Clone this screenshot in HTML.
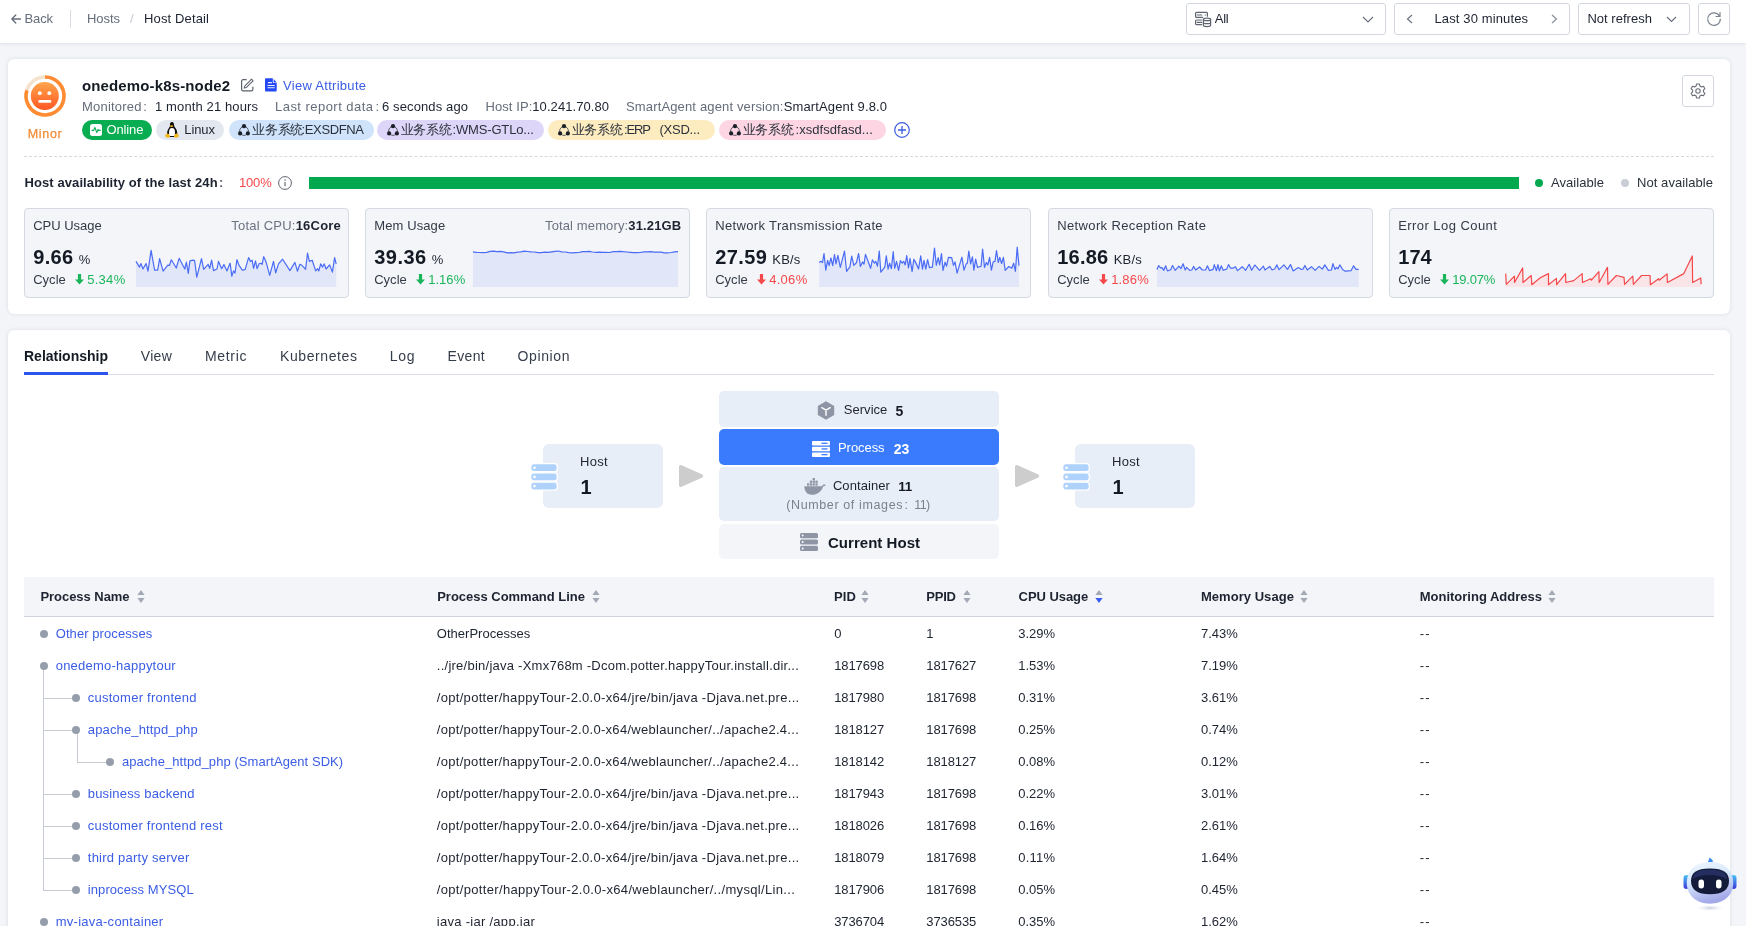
<!DOCTYPE html>
<html><head><meta charset="utf-8"><style>
*{box-sizing:border-box;margin:0;padding:0}
html,body{width:1746px;height:926px;overflow:hidden}
body{background:#f3f5f9;font-family:"Liberation Sans",sans-serif;color:#1d2330;font-size:13px;position:relative}
.a{position:absolute;white-space:nowrap;line-height:1}
svg{position:absolute;overflow:visible}
.g{color:#656d7a}
.card{position:absolute;background:#fff;border-radius:6px;box-shadow:0 0 4px rgba(30,40,60,0.12)}
.btn{position:absolute;border:1px solid #d3d8e0;border-radius:3px;background:#fff}
.pill{position:absolute;top:120px;height:20px;border-radius:10px}
.mc{position:absolute;top:208px;height:90px;border:1px solid #d5d9e1;border-radius:4px;background:#f4f5f9}
.lk{color:#3b5ce4}
</style></head><body><div id="w" style="position:absolute;left:0;top:0;width:1746px;height:926px;will-change:transform">
<div style="position:absolute;left:0;top:0;width:1746px;height:43px;background:#fff;box-shadow:0 1px 3px rgba(30,40,60,0.10)"></div>
<svg style="left:10px;top:13px" width="12" height="12" viewBox="0 0 12 12"><path d="M10.5 6H1.8M5.8 2L1.8 6l4 4" fill="none" stroke="#656d7a" stroke-width="1.3" stroke-linecap="round" stroke-linejoin="round"/></svg>
<div class="a g" style="left:24.5px;top:12.00px;font-size:13px;;letter-spacing:-0.134px">Back</div>
<div class="a" style="left:70px;top:10px;width:1px;height:18px;background:#d8dce3"></div>
<div class="a g" style="left:87px;top:12.00px;font-size:13px;;letter-spacing:-0.057px">Hosts</div>
<div class="a " style="left:130px;top:12.00px;font-size:13px;color:#c3c8d0">/</div>
<div class="a " style="left:144px;top:12.00px;font-size:13px;color:#1d2330;letter-spacing:0.142px">Host Detail</div>
<div class="btn" style="left:1186px;top:3px;width:200px;height:32px"></div>
<svg style="left:1195px;top:12px" width="16" height="15" viewBox="0 0 16 15"><g fill="none" stroke="#5f6570" stroke-width="1.2" stroke-linecap="round"><path d="M7.6 5.4H1.4A0.9 0.9 0 0 1 0.6 4.5V1.2A0.9 0.9 0 0 1 1.4 0.4H11.6A0.9 0.9 0 0 1 12.4 1.2V4.2"/><path d="M2.3 3H6.8M10.2 3h.2"/><path d="M6.6 12.6H1.4A0.9 0.9 0 0 1 0.6 11.8V8.8A0.9 0.9 0 0 1 1.4 8H6.6M2.3 10.4H6.6"/><path d="M8.4 7.4C8.4 6.6 10 6.1 12 6.1S15.6 6.6 15.6 7.4V13.3C15.6 14.1 14 14.6 12 14.6S8.4 14.1 8.4 13.3z"/><path d="M8.4 7.4C8.4 8.2 10 8.7 12 8.7S15.6 8.2 15.6 7.4M8.4 10.4C8.4 11.2 10 11.7 12 11.7S15.6 11.2 15.6 10.4"/></g></svg>
<div class="a " style="left:1214.7px;top:12.00px;font-size:13px;color:#1d2330;letter-spacing:-0.224px">All</div>
<svg style="left:1362px;top:16px" width="12" height="7" viewBox="0 0 12 7"><path d="M1 1l5 5 5-5" fill="none" stroke="#6b7280" stroke-width="1.2"/></svg>
<div class="btn" style="left:1394px;top:3px;width:176px;height:32px"></div>
<svg style="left:1406px;top:14px" width="7" height="10" viewBox="0 0 7 10"><path d="M6 1L1.5 5 6 9" fill="none" stroke="#6b7280" stroke-width="1.2"/></svg>
<div class="a " style="left:1434.5px;top:12.00px;font-size:13px;color:#1d2330;letter-spacing:0.123px">Last 30 minutes</div>
<svg style="left:1551px;top:14px" width="7" height="10" viewBox="0 0 7 10"><path d="M1 1l4.5 4L1 9" fill="none" stroke="#8a919d" stroke-width="1.2"/></svg>
<div class="btn" style="left:1578px;top:3px;width:112px;height:32px"></div>
<div class="a " style="left:1587.4px;top:12.00px;font-size:13px;color:#1d2330;letter-spacing:0.030px">Not refresh</div>
<svg style="left:1666px;top:16px" width="11" height="7" viewBox="0 0 11 7"><path d="M1 1l4.5 4.5L10 1" fill="none" stroke="#6b7280" stroke-width="1.2"/></svg>
<div class="btn" style="left:1698px;top:3px;width:32px;height:32px"></div>
<svg style="left:1706px;top:11px" width="16" height="16" viewBox="0 0 16 16"><path d="M13.6 5.2A6.3 6.3 0 1 0 14.3 8" fill="none" stroke="#7b828e" stroke-width="1.2" stroke-linecap="round"/><path d="M14 1.5v4h-4" fill="none" stroke="#7b828e" stroke-width="1.2" stroke-linecap="round" stroke-linejoin="round"/></svg>
<div class="card" style="left:8px;top:59px;width:1722px;height:255px"></div>
<svg style="left:24px;top:75px" width="42" height="42" viewBox="0 0 42 42"><defs><linearGradient id="fg" x1="0" y1="0" x2="0" y2="1"><stop offset="0" stop-color="#ffa54c"/><stop offset="1" stop-color="#ff5722"/></linearGradient></defs><path d="M21.00 2.00A19 19 0 1 1 2.93 15.13" fill="none" stroke="#ff8c33" stroke-width="3.6"/><path d="M2.93 15.13A19 19 0 0 1 21.00 2.00" fill="none" stroke="#f4e2cc" stroke-width="3.6"/><circle cx="20.8" cy="21" r="14" fill="url(#fg)"/><circle cx="15.8" cy="18.2" r="1.9" fill="#fff"/><circle cx="25.3" cy="18.2" r="1.9" fill="#fff"/><rect x="14.3" y="25" width="13" height="2.8" rx="1.2" fill="#fff"/></svg>
<div class="a " style="left:27.7px;top:127.62px;font-size:12.5px;color:#f38b36;-webkit-text-stroke:0.25px #f38b36;letter-spacing:0.686px">Minor</div>
<div class="a " style="left:82px;top:78.30px;font-size:15px;font-weight:bold;color:#141a24;letter-spacing:0.134px">onedemo-k8s-node2</div>
<svg style="left:241px;top:79px" width="13" height="13" viewBox="0 0 13 13"><path d="M5.6 0.6H2.2A1.6 1.6 0 0 0 0.6 2.2v8.1a1.6 1.6 0 0 0 1.6 1.6h8.1a1.6 1.6 0 0 0 1.6-1.6V7.7" fill="none" stroke="#5b616c" stroke-width="1.2"/><path d="M10.52 0.2L12.08 1.76 5.49 8.39 3.1 9.1 3.93 6.83z" fill="none" stroke="#5b616c" stroke-width="1.05" stroke-linejoin="round"/></svg>
<svg style="left:265px;top:78px" width="12" height="14" viewBox="0 0 12 14"><path d="M1 0.2H7.8V4.2A0.8 0.8 0 0 0 8.6 5H11.7V12.6A1 1 0 0 1 10.7 13.6H1A1 1 0 0 1 0 12.6V1.2A1 1 0 0 1 1 0.2z" fill="#2449f4"/><path d="M8.6 0.9L11.7 4.6H9.1A0.5 0.5 0 0 1 8.6 4.1z" fill="#2449f4"/><path d="M3 4.6H6.9M2.5 7.45H9.7M2.5 9.75H9.7" stroke="#fff" stroke-width="1.05" opacity="0.9"/></svg>
<div class="a lk" style="left:283px;top:79.00px;font-size:13px;;letter-spacing:0.289px">View Attribute</div>
<div class="a g" style="left:82px;top:100.00px;font-size:13px;;letter-spacing:0.212px">Monitored</div>
<div class="a g" style="left:143.3px;top:100.00px;font-size:13px;">:</div>
<div class="a " style="left:155px;top:100.00px;font-size:13px;color:#1d2330;letter-spacing:0.122px">1 month 21 hours</div>
<div class="a g" style="left:275px;top:100.00px;font-size:13px;;letter-spacing:0.463px">Last report data</div>
<div class="a g" style="left:375.5px;top:100.00px;font-size:13px;">:</div>
<div class="a " style="left:382px;top:100.00px;font-size:13px;color:#1d2330;letter-spacing:0.120px">6 seconds ago</div>
<div class="a g" style="left:485.5px;top:100.00px;font-size:13px;;letter-spacing:0.072px">Host IP:<span style="color:#1d2330">10.241.70.80</span></div>
<div class="a g" style="left:626px;top:100.00px;font-size:13px;;letter-spacing:0.148px">SmartAgent agent version:<span style="color:#1d2330">SmartAgent 9.8.0</span></div>
<div class="pill" style="left:82px;width:70px;background:#08ad52"></div>
<svg style="left:90px;top:124px" width="12" height="12" viewBox="0 0 12 12"><rect width="12" height="12" rx="2.5" fill="#fff"/><path d="M1.6 6.4h2.1l1.2-3 1.9 5.2 1.2-3.2.7 1h2" fill="none" stroke="#08ad52" stroke-width="1.1" stroke-linejoin="round"/></svg>
<div class="a " style="left:106.4px;top:123.00px;font-size:13px;color:#fff;letter-spacing:-0.115px">Online</div>
<div class="pill" style="left:156px;width:68px;background:#e3e8f0"></div>
<svg style="left:165px;top:122px" width="14" height="16" viewBox="0 0 14 16"><path d="M6.9 0C5.3 0 4.9 1.6 5 3.4 4.9 4.6 4.4 5.3 3.6 6.6 2.8 7.9 2 9.5 2.1 12.2L12.3 12.2C12.4 9.3 11.6 7.6 10.6 6.2 9.8 5.1 9.2 4.3 9.1 3.2 9 1.4 8.5 0 6.9 0z" fill="#0d0d0d"/><ellipse cx="7" cy="10.2" rx="3" ry="4.3" fill="#fff"/><ellipse cx="6.6" cy="4.1" rx="1.6" ry="0.9" fill="#f2b51a"/><rect x="4.5" y="14" width="5" height="1" fill="#111"/><path d="M0.2 13.6C0.6 12 1.6 11.3 2.6 11.4 3.6 11.5 4.9 12.8 5 14.3 5.1 15.5 4 15.9 2.8 15.7 1.2 15.4-.1 14.8.2 13.6z" fill="#f2b51a"/><path d="M13.8 13.6C13.4 12 12.4 11.3 11.4 11.4 10.4 11.5 9.1 12.8 9 14.3 8.9 15.5 10 15.9 11.2 15.7 12.8 15.4 14.1 14.8 13.8 13.6z" fill="#f2b51a"/></svg>
<div class="a " style="left:184.3px;top:123.00px;font-size:13px;color:#1d2330;letter-spacing:-0.094px">Linux</div>
<div class="pill" style="left:228.5px;width:145px;background:#cfe3fb"></div>
<svg style="left:238.1px;top:124px" width="12" height="12" viewBox="0 0 12 12"><circle cx="6" cy="7" r="4.4" fill="none" stroke="#3a3f48" stroke-width="0.8"/><circle cx="6" cy="2.2" r="2.1" fill="#1b1f27"/><circle cx="2.1" cy="9.4" r="2.1" fill="#1b1f27"/><circle cx="9.9" cy="9.4" r="2.1" fill="#1b1f27"/></svg>
<div class="a " style="left:252.3px;top:123.30px;font-size:13px;color:#2b313b;letter-spacing:-0.35px">业务系统</div>
<div class="a " style="left:301.5px;top:123.00px;font-size:13px;color:#2b313b;letter-spacing:-0.359px">:EXSDFNA</div>
<div class="pill" style="left:377px;width:167px;background:#ded6f9"></div>
<svg style="left:386.6px;top:124px" width="12" height="12" viewBox="0 0 12 12"><circle cx="6" cy="7" r="4.4" fill="none" stroke="#3a3f48" stroke-width="0.8"/><circle cx="6" cy="2.2" r="2.1" fill="#1b1f27"/><circle cx="2.1" cy="9.4" r="2.1" fill="#1b1f27"/><circle cx="9.9" cy="9.4" r="2.1" fill="#1b1f27"/></svg>
<div class="a " style="left:400.8px;top:123.30px;font-size:13px;color:#2b313b;letter-spacing:-0.35px">业务系统</div>
<div class="a " style="left:452.5px;top:123.00px;font-size:13px;color:#2b313b;letter-spacing:-0.160px">:WMS-GTLo...</div>
<div class="pill" style="left:548px;width:167px;background:#fcecc0"></div>
<svg style="left:557.6px;top:124px" width="12" height="12" viewBox="0 0 12 12"><circle cx="6" cy="7" r="4.4" fill="none" stroke="#3a3f48" stroke-width="0.8"/><circle cx="6" cy="2.2" r="2.1" fill="#1b1f27"/><circle cx="2.1" cy="9.4" r="2.1" fill="#1b1f27"/><circle cx="9.9" cy="9.4" r="2.1" fill="#1b1f27"/></svg>
<div class="a " style="left:571.8px;top:123.30px;font-size:13px;color:#2b313b;letter-spacing:-0.35px">业务系统</div>
<div class="a " style="left:624px;top:123.00px;font-size:13px;color:#2b313b;letter-spacing:-1.181px">:ERP</div>
<div class="a " style="left:659.5px;top:123.00px;font-size:13px;color:#2b313b">(</div>
<div class="a " style="left:663.6px;top:123.00px;font-size:13px;color:#2b313b;letter-spacing:-0.233px">XSD...</div>
<div class="pill" style="left:719px;width:167px;background:#fdd5e3"></div>
<svg style="left:728.6px;top:124px" width="12" height="12" viewBox="0 0 12 12"><circle cx="6" cy="7" r="4.4" fill="none" stroke="#3a3f48" stroke-width="0.8"/><circle cx="6" cy="2.2" r="2.1" fill="#1b1f27"/><circle cx="2.1" cy="9.4" r="2.1" fill="#1b1f27"/><circle cx="9.9" cy="9.4" r="2.1" fill="#1b1f27"/></svg>
<div class="a " style="left:742.8px;top:123.30px;font-size:13px;color:#2b313b;letter-spacing:-0.35px">业务系统</div>
<div class="a " style="left:795.5px;top:123.00px;font-size:13px;color:#2b313b;letter-spacing:0.055px">:xsdfsdfasd...</div>
<svg style="left:894px;top:122px" width="16" height="16" viewBox="0 0 16 16"><circle cx="8" cy="8" r="7.3" fill="none" stroke="#3b5ce4" stroke-width="1.2"/><path d="M8 4v8M4 8h8" stroke="#3b5ce4" stroke-width="1.3"/></svg>
<div class="btn" style="left:1682px;top:75px;width:32px;height:32px;border-color:#d3d8e0"></div>
<svg style="left:1690px;top:83px" width="16" height="16" viewBox="0 0 16 16"><path d="M6.6 1h2.8l.5 2 1.6.9 2-.6 1.4 2.4-1.5 1.5v1.6l1.5 1.5-1.4 2.4-2-.6-1.6.9-.5 2H6.6l-.5-2-1.6-.9-2 .6L1.1 10.3l1.5-1.5V7.2L1.1 5.7l1.4-2.4 2 .6L6.1 3z" fill="none" stroke="#6b6f78" stroke-width="1.1" stroke-linejoin="round"/><circle cx="8" cy="8" r="2.2" fill="none" stroke="#6b6f78" stroke-width="1.1"/></svg>
<div class="a" style="left:24px;top:156px;width:1690px;height:0;border-top:1px dashed #d5d9e0"></div>
<div class="a " style="left:24.4px;top:176.00px;font-size:13px;font-weight:bold;color:#1d2330;letter-spacing:0.100px">Host availability of the last 24h</div>
<div class="a " style="left:219px;top:176.00px;font-size:13px;font-weight:bold;color:#5d636e">:</div>
<div class="a " style="left:239px;top:176.00px;font-size:13px;color:#f5484a;letter-spacing:-0.183px">100%</div>
<svg style="left:278px;top:176px" width="14" height="14" viewBox="0 0 14 14"><circle cx="7" cy="7" r="6.4" fill="none" stroke="#5d636e" stroke-width="1"/><path d="M7 6v4.3" stroke="#5d636e" stroke-width="1.1"/><circle cx="7" cy="4" r="0.75" fill="#5d636e"/></svg>
<div class="a" style="left:309px;top:177px;width:1210px;height:12px;background:#02a84e"></div>
<div class="a" style="left:1535px;top:179px;width:8px;height:8px;border-radius:4px;background:#02a84e"></div>
<div class="a " style="left:1551px;top:176.00px;font-size:13px;color:#2b313b;letter-spacing:0.060px">Available</div>
<div class="a" style="left:1621px;top:179px;width:8px;height:8px;border-radius:4px;background:#c9ced6"></div>
<div class="a " style="left:1637px;top:176.00px;font-size:13px;color:#2b313b;letter-spacing:0.070px">Not available</div>
<div class="mc" style="left:24px;width:325px"></div>
<div class="a " style="left:33.2px;top:219.20px;font-size:13px;color:#333a46;letter-spacing:-0.005px">CPU Usage</div>
<div class="a " style="left:231.29999999999998px;top:219.20px;font-size:13px;color:#6b7280;letter-spacing:0.222px">Total CPU:<b style="color:#1d2330">16Core</b></div>
<div class="a " style="left:33.2px;top:247.07px;font-size:20px;font-weight:bold;color:#141a24;letter-spacing:0.358px">9.66</div>
<div class="a " style="left:78.7px;top:253.00px;font-size:13px;color:#1d2330;letter-spacing:-0.559px">%</div>
<div class="a " style="left:33.2px;top:273.00px;font-size:13px;color:#333a46;letter-spacing:0.023px">Cycle</div>
<svg style="left:75px;top:274px" width="9" height="11" viewBox="0 0 9 11"><path d="M2.9 0h3.2v5.6H9L4.5 10.5 0 5.6h2.9z" fill="#1ab55b"/></svg>
<div class="a " style="left:87.2px;top:273.00px;font-size:13px;color:#1ab55b;letter-spacing:0.285px">5.34%</div>
<svg style="left:0;top:0" width="1746" height="926"><path d="M136.0,287 L136.0,261.4 L139.5,267.1 L141.0,263.6 L142.9,269.0 L146.1,263.6 L148.0,271.2 L151.1,250.4 L154.6,270.2 L157.7,270.2 L159.6,258.6 L163.1,271.2 L167.8,265.2 L169.4,265.5 L171.3,259.8 L176.3,268.0 L179.1,258.3 L184.8,269.0 L186.4,262.1 L188.3,273.4 L189.9,260.8 L193.0,260.2 L194.6,260.5 L196.8,277.2 L201.5,258.6 L203.7,269.3 L208.1,264.3 L209.7,268.4 L211.6,260.2 L213.5,270.6 L217.0,269.0 L218.5,261.4 L221.7,268.7 L223.9,264.6 L227.0,270.9 L230.0,263.3 L230.2,263.6 L231.8,276.2 L231.9,275.9 L233.5,270.9 L234.9,272.8 L235.0,273.1 L236.9,259.8 L237.1,259.8 L238.8,264.9 L242.3,270.2 L245.1,269.6 L248.6,257.6 L250.5,261.4 L252.1,260.2 L253.6,268.4 L255.5,260.8 L257.1,268.7 L259.0,263.9 L260.9,263.3 L262.1,264.3 L263.7,256.7 L265.9,261.4 L269.7,275.3 L273.5,261.4 L275.7,272.8 L278.5,263.9 L282.6,259.2 L289.9,270.6 L294.9,262.4 L297.4,271.2 L299.9,264.3 L301.8,265.2 L305.6,269.3 L307.5,253.2 L309.4,261.4 L312.2,260.2 L315.7,270.9 L317.6,268.7 L318.8,270.9 L320.7,263.9 L322.6,267.1 L324.2,263.9 L326.1,269.0 L329.6,264.9 L332.4,272.1 L334.6,257.6 L336.2,263.9 L336.2,287 Z" fill="#e1e6f8"/><path d="M136.0,261.4 L139.5,267.1 L141.0,263.6 L142.9,269.0 L146.1,263.6 L148.0,271.2 L151.1,250.4 L154.6,270.2 L157.7,270.2 L159.6,258.6 L163.1,271.2 L167.8,265.2 L169.4,265.5 L171.3,259.8 L176.3,268.0 L179.1,258.3 L184.8,269.0 L186.4,262.1 L188.3,273.4 L189.9,260.8 L193.0,260.2 L194.6,260.5 L196.8,277.2 L201.5,258.6 L203.7,269.3 L208.1,264.3 L209.7,268.4 L211.6,260.2 L213.5,270.6 L217.0,269.0 L218.5,261.4 L221.7,268.7 L223.9,264.6 L227.0,270.9 L230.0,263.3 L230.2,263.6 L231.8,276.2 L231.9,275.9 L233.5,270.9 L234.9,272.8 L235.0,273.1 L236.9,259.8 L237.1,259.8 L238.8,264.9 L242.3,270.2 L245.1,269.6 L248.6,257.6 L250.5,261.4 L252.1,260.2 L253.6,268.4 L255.5,260.8 L257.1,268.7 L259.0,263.9 L260.9,263.3 L262.1,264.3 L263.7,256.7 L265.9,261.4 L269.7,275.3 L273.5,261.4 L275.7,272.8 L278.5,263.9 L282.6,259.2 L289.9,270.6 L294.9,262.4 L297.4,271.2 L299.9,264.3 L301.8,265.2 L305.6,269.3 L307.5,253.2 L309.4,261.4 L312.2,260.2 L315.7,270.9 L317.6,268.7 L318.8,270.9 L320.7,263.9 L322.6,267.1 L324.2,263.9 L326.1,269.0 L329.6,264.9 L332.4,272.1 L334.6,257.6 L336.2,263.9" fill="none" stroke="#4a6cf5" stroke-width="1.2" stroke-linejoin="round"/></svg>
<div class="mc" style="left:365px;width:325px"></div>
<div class="a " style="left:374.2px;top:219.20px;font-size:13px;color:#333a46;letter-spacing:0.115px">Mem Usage</div>
<div class="a " style="left:545.0px;top:219.20px;font-size:13px;color:#6b7280;letter-spacing:0.129px">Total memory:<b style="color:#1d2330">31.21GB</b></div>
<div class="a " style="left:374.2px;top:247.07px;font-size:20px;font-weight:bold;color:#141a24;letter-spacing:0.487px">39.36</div>
<div class="a " style="left:431.7px;top:253.00px;font-size:13px;color:#1d2330;letter-spacing:-0.559px">%</div>
<div class="a " style="left:374.2px;top:273.00px;font-size:13px;color:#333a46;letter-spacing:0.023px">Cycle</div>
<svg style="left:416px;top:274px" width="9" height="11" viewBox="0 0 9 11"><path d="M2.9 0h3.2v5.6H9L4.5 10.5 0 5.6h2.9z" fill="#1ab55b"/></svg>
<div class="a " style="left:428.2px;top:273.00px;font-size:13px;color:#1ab55b;letter-spacing:0.035px">1.16%</div>
<svg style="left:0;top:0" width="1746" height="926"><path d="M473.0,287 L473.0,251.8 L476.4,252.4 L479.8,252.5 L483.2,252.6 L486.7,252.3 L490.1,251.4 L493.5,251.1 L496.9,251.7 L500.3,251.4 L503.8,251.8 L507.2,252.8 L510.6,252.6 L514.0,252.8 L517.4,252.2 L520.8,251.9 L524.2,251.2 L527.7,251.5 L531.1,251.9 L534.5,252.0 L537.9,252.6 L541.3,252.7 L544.8,252.2 L548.2,252.4 L551.6,251.8 L555.0,251.3 L558.4,251.0 L561.8,251.9 L565.2,252.0 L568.7,252.6 L572.1,252.9 L575.5,252.7 L578.9,252.5 L582.3,251.7 L585.8,251.7 L589.2,251.4 L592.6,252.0 L596.0,252.3 L599.4,252.1 L602.8,252.3 L606.2,252.3 L609.7,252.5 L613.1,251.7 L616.5,251.6 L619.9,251.3 L623.3,251.7 L626.8,252.0 L630.2,252.3 L633.6,252.7 L637.0,252.6 L640.4,252.5 L643.8,251.9 L647.2,251.8 L650.7,251.7 L654.1,252.1 L657.5,252.2 L660.9,252.2 L664.3,252.9 L667.8,252.9 L671.2,252.5 L674.6,251.8 L678.0,251.6 L678.0,287 Z" fill="#e1e6f8"/><path d="M473.0,251.8 L476.4,252.4 L479.8,252.5 L483.2,252.6 L486.7,252.3 L490.1,251.4 L493.5,251.1 L496.9,251.7 L500.3,251.4 L503.8,251.8 L507.2,252.8 L510.6,252.6 L514.0,252.8 L517.4,252.2 L520.8,251.9 L524.2,251.2 L527.7,251.5 L531.1,251.9 L534.5,252.0 L537.9,252.6 L541.3,252.7 L544.8,252.2 L548.2,252.4 L551.6,251.8 L555.0,251.3 L558.4,251.0 L561.8,251.9 L565.2,252.0 L568.7,252.6 L572.1,252.9 L575.5,252.7 L578.9,252.5 L582.3,251.7 L585.8,251.7 L589.2,251.4 L592.6,252.0 L596.0,252.3 L599.4,252.1 L602.8,252.3 L606.2,252.3 L609.7,252.5 L613.1,251.7 L616.5,251.6 L619.9,251.3 L623.3,251.7 L626.8,252.0 L630.2,252.3 L633.6,252.7 L637.0,252.6 L640.4,252.5 L643.8,251.9 L647.2,251.8 L650.7,251.7 L654.1,252.1 L657.5,252.2 L660.9,252.2 L664.3,252.9 L667.8,252.9 L671.2,252.5 L674.6,251.8 L678.0,251.6" fill="none" stroke="#4a6cf5" stroke-width="1.2" stroke-linejoin="round"/></svg>
<div class="mc" style="left:706px;width:325px"></div>
<div class="a " style="left:715.2px;top:219.20px;font-size:13px;color:#333a46;letter-spacing:0.353px">Network Transmission Rate</div>
<div class="a " style="left:715.2px;top:247.07px;font-size:20px;font-weight:bold;color:#141a24;letter-spacing:0.387px">27.59</div>
<div class="a " style="left:772.3000000000001px;top:253.00px;font-size:13px;color:#1d2330;letter-spacing:0.182px">KB/s</div>
<div class="a " style="left:715.2px;top:273.00px;font-size:13px;color:#333a46;letter-spacing:0.023px">Cycle</div>
<svg style="left:757px;top:274px" width="9" height="11" viewBox="0 0 9 11"><path d="M2.9 0h3.2v5.6H9L4.5 10.5 0 5.6h2.9z" fill="#f5484a"/></svg>
<div class="a " style="left:769.2px;top:273.00px;font-size:13px;color:#f5484a;letter-spacing:0.285px">4.06%</div>
<svg style="left:0;top:0" width="1746" height="926"><path d="M819.2,287 L819.2,262.5 L820.7,261.3 L822.5,262.5 L824.0,253.5 L825.8,270.1 L827.6,260.4 L829.1,265.6 L830.9,258.0 L832.7,265.6 L834.5,254.7 L836.0,263.8 L837.9,255.3 L840.3,267.4 L844.5,251.1 L846.6,271.3 L849.9,266.8 L851.7,256.2 L853.8,265.3 L856.5,262.5 L858.6,253.5 L860.4,266.5 L862.5,261.9 L864.0,264.1 L865.5,254.4 L870.6,268.3 L872.4,259.8 L874.5,263.2 L875.7,261.3 L877.5,266.2 L879.3,251.1 L880.8,272.2 L884.8,267.1 L886.3,255.9 L888.1,269.2 L889.6,263.2 L891.4,268.6 L893.2,251.7 L894.7,268.3 L896.5,261.3 L898.6,270.4 L900.4,260.7 L902.2,263.2 L903.7,261.3 L905.2,265.0 L906.7,255.6 L908.5,268.0 L910.0,258.3 L912.1,271.6 L913.9,259.2 L918.4,268.3 L915.0,261.0 L918.6,268.9 L920.7,255.9 L922.5,269.2 L924.0,260.4 L925.8,269.2 L927.6,259.5 L929.4,267.7 L932.4,267.1 L934.5,248.1 L936.3,265.3 L938.2,257.7 L939.7,265.0 L941.5,253.5 L943.0,270.4 L945.1,262.2 L946.6,266.2 L948.4,257.4 L951.7,257.7 L953.5,265.3 L955.0,261.9 L957.1,273.1 L961.9,257.1 L964.0,270.1 L966.1,264.1 L967.3,263.2 L968.8,251.1 L970.6,263.8 L972.4,256.8 L973.9,270.1 L975.7,259.2 L977.5,267.4 L981.1,266.2 L982.6,249.0 L984.5,267.4 L986.3,262.5 L987.8,265.0 L989.6,257.4 L991.4,270.1 L993.2,261.9 L995.0,261.3 L996.5,250.5 L998.3,262.5 L999.8,257.4 L1001.6,263.5 L1003.4,257.4 L1005.2,270.4 L1008.8,266.5 L1011.8,268.3 L1013.6,263.2 L1015.4,271.3 L1017.2,247.2 L1019.0,265.6 L1019.0,287 Z" fill="#e1e6f8"/><path d="M819.2,262.5 L820.7,261.3 L822.5,262.5 L824.0,253.5 L825.8,270.1 L827.6,260.4 L829.1,265.6 L830.9,258.0 L832.7,265.6 L834.5,254.7 L836.0,263.8 L837.9,255.3 L840.3,267.4 L844.5,251.1 L846.6,271.3 L849.9,266.8 L851.7,256.2 L853.8,265.3 L856.5,262.5 L858.6,253.5 L860.4,266.5 L862.5,261.9 L864.0,264.1 L865.5,254.4 L870.6,268.3 L872.4,259.8 L874.5,263.2 L875.7,261.3 L877.5,266.2 L879.3,251.1 L880.8,272.2 L884.8,267.1 L886.3,255.9 L888.1,269.2 L889.6,263.2 L891.4,268.6 L893.2,251.7 L894.7,268.3 L896.5,261.3 L898.6,270.4 L900.4,260.7 L902.2,263.2 L903.7,261.3 L905.2,265.0 L906.7,255.6 L908.5,268.0 L910.0,258.3 L912.1,271.6 L913.9,259.2 L918.4,268.3 L915.0,261.0 L918.6,268.9 L920.7,255.9 L922.5,269.2 L924.0,260.4 L925.8,269.2 L927.6,259.5 L929.4,267.7 L932.4,267.1 L934.5,248.1 L936.3,265.3 L938.2,257.7 L939.7,265.0 L941.5,253.5 L943.0,270.4 L945.1,262.2 L946.6,266.2 L948.4,257.4 L951.7,257.7 L953.5,265.3 L955.0,261.9 L957.1,273.1 L961.9,257.1 L964.0,270.1 L966.1,264.1 L967.3,263.2 L968.8,251.1 L970.6,263.8 L972.4,256.8 L973.9,270.1 L975.7,259.2 L977.5,267.4 L981.1,266.2 L982.6,249.0 L984.5,267.4 L986.3,262.5 L987.8,265.0 L989.6,257.4 L991.4,270.1 L993.2,261.9 L995.0,261.3 L996.5,250.5 L998.3,262.5 L999.8,257.4 L1001.6,263.5 L1003.4,257.4 L1005.2,270.4 L1008.8,266.5 L1011.8,268.3 L1013.6,263.2 L1015.4,271.3 L1017.2,247.2 L1019.0,265.6" fill="none" stroke="#4a6cf5" stroke-width="1.2" stroke-linejoin="round"/></svg>
<div class="mc" style="left:1048px;width:325px"></div>
<div class="a " style="left:1057.2px;top:219.20px;font-size:13px;color:#333a46;letter-spacing:0.372px">Network Reception Rate</div>
<div class="a " style="left:1057.2px;top:247.07px;font-size:20px;font-weight:bold;color:#141a24;letter-spacing:0.237px">16.86</div>
<div class="a " style="left:1113.7px;top:253.00px;font-size:13px;color:#1d2330;letter-spacing:0.182px">KB/s</div>
<div class="a " style="left:1057.2px;top:273.00px;font-size:13px;color:#333a46;letter-spacing:0.023px">Cycle</div>
<svg style="left:1099px;top:274px" width="9" height="11" viewBox="0 0 9 11"><path d="M2.9 0h3.2v5.6H9L4.5 10.5 0 5.6h2.9z" fill="#f5484a"/></svg>
<div class="a " style="left:1111.2px;top:273.00px;font-size:13px;color:#f5484a;letter-spacing:0.160px">1.86%</div>
<svg style="left:0;top:0" width="1746" height="926"><path d="M1156.9,287 L1156.9,269.4 L1158.7,265.5 L1160.5,267.9 L1162.0,267.6 L1163.8,270.3 L1165.6,265.8 L1167.4,270.9 L1170.7,269.7 L1172.5,265.5 L1175.2,270.3 L1178.9,266.1 L1181.0,268.5 L1183.1,263.7 L1185.2,270.0 L1186.7,267.3 L1189.7,270.3 L1191.8,270.0 L1193.6,266.4 L1195.7,270.0 L1199.6,267.0 L1202.3,270.0 L1205.6,270.0 L1207.4,265.8 L1209.5,270.6 L1213.1,269.4 L1214.3,264.6 L1216.4,270.6 L1217.9,264.6 L1219.4,270.9 L1221.3,265.8 L1223.1,270.3 L1226.7,269.1 L1228.5,264.6 L1230.6,268.2 L1233.0,268.2 L1235.4,266.7 L1237.5,270.6 L1242.3,266.7 L1245.6,270.3 L1249.2,264.3 L1251.6,270.3 L1254.6,265.2 L1255.0,265.2 L1259.5,270.3 L1263.4,266.1 L1264.9,270.0 L1269.7,266.4 L1272.1,270.0 L1274.8,268.8 L1276.9,264.9 L1279.1,269.7 L1283.9,264.9 L1287.5,269.4 L1290.5,264.6 L1293.2,270.9 L1298.3,267.6 L1301.3,269.4 L1303.1,269.1 L1304.9,265.5 L1307.3,270.0 L1311.5,266.7 L1315.1,270.3 L1319.0,266.4 L1322.3,269.1 L1324.8,264.9 L1328.4,270.3 L1331.4,270.0 L1332.9,263.7 L1335.0,269.4 L1336.5,267.3 L1338.0,268.8 L1339.8,264.9 L1342.8,269.7 L1345.2,271.2 L1351.2,270.6 L1353.6,265.8 L1356.0,269.4 L1358.7,269.4 L1358.7,287 Z" fill="#e1e6f8"/><path d="M1156.9,269.4 L1158.7,265.5 L1160.5,267.9 L1162.0,267.6 L1163.8,270.3 L1165.6,265.8 L1167.4,270.9 L1170.7,269.7 L1172.5,265.5 L1175.2,270.3 L1178.9,266.1 L1181.0,268.5 L1183.1,263.7 L1185.2,270.0 L1186.7,267.3 L1189.7,270.3 L1191.8,270.0 L1193.6,266.4 L1195.7,270.0 L1199.6,267.0 L1202.3,270.0 L1205.6,270.0 L1207.4,265.8 L1209.5,270.6 L1213.1,269.4 L1214.3,264.6 L1216.4,270.6 L1217.9,264.6 L1219.4,270.9 L1221.3,265.8 L1223.1,270.3 L1226.7,269.1 L1228.5,264.6 L1230.6,268.2 L1233.0,268.2 L1235.4,266.7 L1237.5,270.6 L1242.3,266.7 L1245.6,270.3 L1249.2,264.3 L1251.6,270.3 L1254.6,265.2 L1255.0,265.2 L1259.5,270.3 L1263.4,266.1 L1264.9,270.0 L1269.7,266.4 L1272.1,270.0 L1274.8,268.8 L1276.9,264.9 L1279.1,269.7 L1283.9,264.9 L1287.5,269.4 L1290.5,264.6 L1293.2,270.9 L1298.3,267.6 L1301.3,269.4 L1303.1,269.1 L1304.9,265.5 L1307.3,270.0 L1311.5,266.7 L1315.1,270.3 L1319.0,266.4 L1322.3,269.1 L1324.8,264.9 L1328.4,270.3 L1331.4,270.0 L1332.9,263.7 L1335.0,269.4 L1336.5,267.3 L1338.0,268.8 L1339.8,264.9 L1342.8,269.7 L1345.2,271.2 L1351.2,270.6 L1353.6,265.8 L1356.0,269.4 L1358.7,269.4" fill="none" stroke="#4a6cf5" stroke-width="1.2" stroke-linejoin="round"/></svg>
<div class="mc" style="left:1389px;width:325px"></div>
<div class="a " style="left:1398.2px;top:219.20px;font-size:13px;color:#333a46;letter-spacing:0.444px">Error Log Count</div>
<div class="a " style="left:1398.2px;top:247.07px;font-size:20px;font-weight:bold;color:#141a24;letter-spacing:0.065px">174</div>
<div class="a " style="left:1398.2px;top:273.00px;font-size:13px;color:#333a46;letter-spacing:0.023px">Cycle</div>
<svg style="left:1440px;top:274px" width="9" height="11" viewBox="0 0 9 11"><path d="M2.9 0h3.2v5.6H9L4.5 10.5 0 5.6h2.9z" fill="#1ab55b"/></svg>
<div class="a " style="left:1452.2px;top:273.00px;font-size:13px;color:#1ab55b;letter-spacing:-0.178px">19.07%</div>
<svg style="left:0;top:0" width="1746" height="926"><path d="M1505.7,287 L1505.7,273.6 L1506.3,284.3 L1514.5,276.1 L1514.5,282.5 L1522.7,268.0 L1523.0,282.5 L1531.2,275.5 L1531.8,284.7 L1540.3,277.7 L1548.5,273.6 L1548.5,284.7 L1556.4,278.4 L1556.7,284.7 L1565.5,273.6 L1565.8,282.5 L1573.7,280.6 L1582.2,273.6 L1582.5,282.5 L1590.7,278.7 L1591.4,280.2 L1598.9,271.7 L1599.2,282.5 L1607.5,267.3 L1607.9,284.3 L1616.4,275.5 L1624.0,277.4 L1624.6,284.3 L1632.8,276.1 L1633.4,284.3 L1641.6,275.5 L1650.1,275.5 L1650.4,284.7 L1658.6,278.7 L1659.2,280.2 L1667.1,273.9 L1667.4,282.5 L1683.8,273.6 L1692.3,256.0 L1692.6,282.5 L1700.8,278.0 L1701.1,284.3 L1701.1,287 Z" fill="#f9e4e8"/><path d="M1505.7,273.6 L1506.3,284.3 L1514.5,276.1 L1514.5,282.5 L1522.7,268.0 L1523.0,282.5 L1531.2,275.5 L1531.8,284.7 L1540.3,277.7 L1548.5,273.6 L1548.5,284.7 L1556.4,278.4 L1556.7,284.7 L1565.5,273.6 L1565.8,282.5 L1573.7,280.6 L1582.2,273.6 L1582.5,282.5 L1590.7,278.7 L1591.4,280.2 L1598.9,271.7 L1599.2,282.5 L1607.5,267.3 L1607.9,284.3 L1616.4,275.5 L1624.0,277.4 L1624.6,284.3 L1632.8,276.1 L1633.4,284.3 L1641.6,275.5 L1650.1,275.5 L1650.4,284.7 L1658.6,278.7 L1659.2,280.2 L1667.1,273.9 L1667.4,282.5 L1683.8,273.6 L1692.3,256.0 L1692.6,282.5 L1700.8,278.0 L1701.1,284.3" fill="none" stroke="#f5484a" stroke-width="1.2" stroke-linejoin="round"/></svg>
<div class="card" style="left:8px;top:330px;width:1722px;height:620px"></div>
<div class="a " style="left:24px;top:349.35px;font-size:14px;font-weight:bold;color:#141a24;letter-spacing:-0.001px">Relationship</div>
<div class="a " style="left:140.8px;top:349.35px;font-size:14px;color:#363d4a;letter-spacing:0.303px">View</div>
<div class="a " style="left:205px;top:349.35px;font-size:14px;color:#363d4a;letter-spacing:0.678px">Metric</div>
<div class="a " style="left:280px;top:349.35px;font-size:14px;color:#363d4a;letter-spacing:0.599px">Kubernetes</div>
<div class="a " style="left:389.8px;top:349.35px;font-size:14px;color:#363d4a;letter-spacing:0.671px">Log</div>
<div class="a " style="left:447.5px;top:349.35px;font-size:14px;color:#363d4a;letter-spacing:0.350px">Event</div>
<div class="a " style="left:517.5px;top:349.35px;font-size:14px;color:#363d4a;letter-spacing:0.624px">Opinion</div>
<div class="a" style="left:24px;top:374px;width:1690px;height:1px;background:#d8dce3"></div>
<div class="a" style="left:24px;top:372px;width:84px;height:3px;background:#2d55eb"></div>
<div class="a" style="left:543px;top:444px;width:120px;height:64px;border-radius:6px;background:#e8eef7"></div>
<svg style="left:530px;top:463px" width="28" height="28" viewBox="0 0 28 28"><g fill="#aed2fb" stroke="#fff" stroke-width="1.3"><rect x="0.7" y="0.7" width="26.6" height="8" rx="3"/><rect x="0.7" y="9.9" width="26.6" height="8" rx="3"/><rect x="0.7" y="19.1" width="26.6" height="8" rx="3"/></g><circle cx="4.5" cy="4.7" r="1.3" fill="#fff"/><circle cx="4.5" cy="13.9" r="1.3" fill="#fff"/><circle cx="4.5" cy="23.1" r="1.3" fill="#fff"/></svg>
<div class="a " style="left:580px;top:455.00px;font-size:13px;color:#1d2330;letter-spacing:0.290px">Host</div>
<div class="a " style="left:580.5px;top:477.07px;font-size:20px;font-weight:bold;color:#141a24">1</div>
<div class="a" style="left:1075px;top:444px;width:120px;height:64px;border-radius:6px;background:#e8eef7"></div>
<svg style="left:1062px;top:463px" width="28" height="28" viewBox="0 0 28 28"><g fill="#aed2fb" stroke="#fff" stroke-width="1.3"><rect x="0.7" y="0.7" width="26.6" height="8" rx="3"/><rect x="0.7" y="9.9" width="26.6" height="8" rx="3"/><rect x="0.7" y="19.1" width="26.6" height="8" rx="3"/></g><circle cx="4.5" cy="4.7" r="1.3" fill="#fff"/><circle cx="4.5" cy="13.9" r="1.3" fill="#fff"/><circle cx="4.5" cy="23.1" r="1.3" fill="#fff"/></svg>
<div class="a " style="left:1112px;top:455.00px;font-size:13px;color:#1d2330;letter-spacing:0.290px">Host</div>
<div class="a " style="left:1112.5px;top:477.07px;font-size:20px;font-weight:bold;color:#141a24">1</div>
<svg style="left:679px;top:464px" width="24" height="24" viewBox="0 0 24 24"><path d="M2.6 1.3Q0 0 0 3v18q0 3 2.6 1.7l20.8-9.3q1.6-1.4 0-2.8z" fill="#cdcdcd"/></svg>
<svg style="left:1015px;top:464px" width="24" height="24" viewBox="0 0 24 24"><path d="M2.6 1.3Q0 0 0 3v18q0 3 2.6 1.7l20.8-9.3q1.6-1.4 0-2.8z" fill="#cdcdcd"/></svg>
<div class="a" style="left:719px;top:391px;width:280px;height:36px;border-radius:5px;background:#e8eef7"></div>
<div class="a" style="left:719px;top:429px;width:280px;height:36px;border-radius:5px;background:#3a7afd"></div>
<div class="a" style="left:719px;top:467px;width:280px;height:53.5px;border-radius:5px;background:#e8eef7"></div>
<div class="a" style="left:719px;top:523.5px;width:280px;height:35px;border-radius:5px;background:#f3f5f9"></div>
<svg style="left:817px;top:400.5px" width="18" height="19" viewBox="0 0 18 19"><path d="M9 0.3l8.2 4.6v9.2L9 18.7 0.8 14.1V4.9z" fill="#8e96a5"/><path d="M4.8 6.7L9 9.2l4.2-2.5M9 9.2v5" fill="none" stroke="#fff" stroke-width="1.4" stroke-linecap="round"/></svg>
<div class="a " style="left:843.8px;top:403.20px;font-size:13px;color:#1d2330;letter-spacing:0.025px">Service</div>
<div class="a " style="left:895.5px;top:403.85px;font-size:14px;font-weight:bold;color:#141a24">5</div>
<svg style="left:812px;top:440.5px" width="18" height="16" viewBox="0 0 18 16"><g fill="#fff"><rect x="0" y="0" width="18" height="4.6" rx="0.8"/><rect x="0" y="5.7" width="18" height="4.6" rx="0.8"/><rect x="0" y="11.4" width="18" height="4.6" rx="0.8"/></g><g fill="#3a7afd"><rect x="9.5" y="1.6" width="6" height="1.3"/><rect x="9.5" y="7.3" width="6" height="1.3"/><rect x="9.5" y="13" width="6" height="1.3"/></g></svg>
<div class="a " style="left:838px;top:441.00px;font-size:13px;color:#fff;letter-spacing:-0.060px">Process</div>
<div class="a " style="left:893.7px;top:441.55px;font-size:14px;font-weight:bold;color:#fff;letter-spacing:0.028px">23</div>
<svg style="left:804px;top:478px" width="22" height="17" viewBox="0 0 22 17"><path d="M0.3 8.3h17.6c.6-1.5 1.8-2 3.8-1.6-.5 1-1.4 1.6-2.6 1.7C17.6 13.5 13.4 16.7 7.5 16.7 3.2 16.7.6 13.8.3 8.3z" fill="#8e96a5"/><g fill="#8e96a5"><rect x="3" y="5.3" width="2.3" height="2.3"/><rect x="5.8" y="5.3" width="2.3" height="2.3"/><rect x="8.6" y="5.3" width="2.3" height="2.3"/><rect x="11.4" y="5.3" width="2.3" height="2.3"/><rect x="5.8" y="2.6" width="2.3" height="2.3"/><rect x="8.6" y="2.6" width="2.3" height="2.3"/><rect x="11.4" y="2.6" width="2.3" height="2.3"/><rect x="8.6" y="0" width="2.3" height="2.3"/></g></svg>
<div class="a " style="left:832.9px;top:479.00px;font-size:13px;color:#1d2330;letter-spacing:0.079px">Container</div>
<div class="a " style="left:898.3px;top:480.17px;font-size:13.5px;font-weight:bold;color:#141a24;letter-spacing:-0.3px">11</div>
<div class="a " style="left:786.2px;top:498.82px;font-size:12.5px;color:#7a818d;letter-spacing:0.626px">(Number of images</div>
<div class="a " style="left:904.5px;top:498.82px;font-size:12.5px;color:#7a818d">:</div>
<div class="a " style="left:914.3px;top:498.82px;font-size:12.5px;color:#7a818d;letter-spacing:-0.6px">11)</div>
<svg style="left:800px;top:533px" width="18" height="18" viewBox="0 0 19 18" preserveAspectRatio="none"><g fill="#8e96a5"><rect x="0" y="0" width="19" height="5.2" rx="1.5"/><rect x="0" y="6.4" width="19" height="5.2" rx="1.5"/><rect x="0" y="12.8" width="19" height="5.2" rx="1.5"/></g><g fill="#fff"><circle cx="2.8" cy="2.6" r="1"/><circle cx="2.8" cy="9" r="1"/><circle cx="2.8" cy="15.4" r="1"/></g></svg>
<div class="a " style="left:828px;top:535.30px;font-size:15px;font-weight:bold;color:#141a24;letter-spacing:0.030px">Current Host</div>
<div class="a" style="left:24px;top:577px;width:1690px;height:40px;background:#f4f5f8;border-bottom:1px solid #cfd4dc"></div>
<div class="a " style="left:40.4px;top:590.20px;font-size:13px;font-weight:bold;color:#1d2330;letter-spacing:-0.037px">Process Name</div>
<svg style="left:136.6px;top:590px" width="8" height="13" viewBox="0 0 8 13"><path d="M4 0L7.6 5H0.4z" fill="#a2a9b5"/><path d="M4 13L7.6 8H0.4z" fill="#a2a9b5"/></svg>
<div class="a " style="left:437.2px;top:590.20px;font-size:13px;font-weight:bold;color:#1d2330;letter-spacing:-0.016px">Process Command Line</div>
<svg style="left:591.8px;top:590px" width="8" height="13" viewBox="0 0 8 13"><path d="M4 0L7.6 5H0.4z" fill="#a2a9b5"/><path d="M4 13L7.6 8H0.4z" fill="#a2a9b5"/></svg>
<div class="a " style="left:834px;top:590.20px;font-size:13px;font-weight:bold;color:#1d2330;letter-spacing:0.064px">PID</div>
<svg style="left:861px;top:590px" width="8" height="13" viewBox="0 0 8 13"><path d="M4 0L7.6 5H0.4z" fill="#a2a9b5"/><path d="M4 13L7.6 8H0.4z" fill="#a2a9b5"/></svg>
<div class="a " style="left:926.2px;top:590.20px;font-size:13px;font-weight:bold;color:#1d2330;letter-spacing:-0.181px">PPID</div>
<svg style="left:962.5px;top:590px" width="8" height="13" viewBox="0 0 8 13"><path d="M4 0L7.6 5H0.4z" fill="#a2a9b5"/><path d="M4 13L7.6 8H0.4z" fill="#a2a9b5"/></svg>
<div class="a " style="left:1018.6px;top:590.20px;font-size:13px;font-weight:bold;color:#1d2330;letter-spacing:-0.060px">CPU Usage</div>
<svg style="left:1094.8px;top:590px" width="8" height="13" viewBox="0 0 8 13"><path d="M4 0L7.6 5H0.4z" fill="#a2a9b5"/><path d="M4 13L7.6 8H0.4z" fill="#3a5cf5"/></svg>
<div class="a " style="left:1200.9px;top:590.20px;font-size:13px;font-weight:bold;color:#1d2330;letter-spacing:0.048px">Memory Usage</div>
<svg style="left:1299.5px;top:590px" width="8" height="13" viewBox="0 0 8 13"><path d="M4 0L7.6 5H0.4z" fill="#a2a9b5"/><path d="M4 13L7.6 8H0.4z" fill="#a2a9b5"/></svg>
<div class="a " style="left:1419.7px;top:590.20px;font-size:13px;font-weight:bold;color:#1d2330;letter-spacing:0.001px">Monitoring Address</div>
<svg style="left:1547.6px;top:590px" width="8" height="13" viewBox="0 0 8 13"><path d="M4 0L7.6 5H0.4z" fill="#a2a9b5"/><path d="M4 13L7.6 8H0.4z" fill="#a2a9b5"/></svg>
<div class="a" style="left:43px;top:666px;width:1px;height:224px;background:#c5cad3"></div>
<div class="a" style="left:43px;top:697.5px;width:30px;height:1px;background:#c5cad3"></div>
<div class="a" style="left:43px;top:729.5px;width:30px;height:1px;background:#c5cad3"></div>
<div class="a" style="left:43px;top:793.5px;width:30px;height:1px;background:#c5cad3"></div>
<div class="a" style="left:43px;top:825.5px;width:30px;height:1px;background:#c5cad3"></div>
<div class="a" style="left:43px;top:857.5px;width:30px;height:1px;background:#c5cad3"></div>
<div class="a" style="left:43px;top:889.5px;width:30px;height:1px;background:#c5cad3"></div>
<div class="a" style="left:76.5px;top:730px;width:1px;height:32px;background:#c5cad3"></div>
<div class="a" style="left:76.5px;top:761.5px;width:32px;height:1px;background:#c5cad3"></div>
<div class="a" style="left:40px;top:630px;width:8px;height:8px;border-radius:4px;background:#979eab"></div>
<div class="a lk" style="left:55.7px;top:627.40px;font-size:13px;;letter-spacing:0.081px">Other processes</div>
<div class="a " style="left:436.8px;top:627.40px;font-size:13px;color:#1d2330;letter-spacing:0.023px">OtherProcesses</div>
<div class="a " style="left:834.2px;top:627.40px;font-size:13px;color:#1d2330">0</div>
<div class="a " style="left:926.3px;top:627.40px;font-size:13px;color:#1d2330">1</div>
<div class="a " style="left:1018.3px;top:627.40px;font-size:13px;color:#1d2330;letter-spacing:-0.015px">3.29%</div>
<div class="a " style="left:1201px;top:627.40px;font-size:13px;color:#1d2330;letter-spacing:-0.015px">7.43%</div>
<div class="a " style="left:1419.7px;top:627.40px;font-size:13px;color:#1d2330;letter-spacing:1.142px">--</div>
<div class="a" style="left:40px;top:662px;width:8px;height:8px;border-radius:4px;background:#979eab"></div>
<div class="a lk" style="left:55.7px;top:659.40px;font-size:13px;;letter-spacing:0.228px">onedemo-happytour</div>
<div class="a " style="left:436.8px;top:659.40px;font-size:13px;color:#1d2330;letter-spacing:0.249px">../jre/bin/java -Xmx768m -Dcom.potter.happyTour.install.dir...</div>
<div class="a " style="left:834.2px;top:659.40px;font-size:13px;color:#1d2330;letter-spacing:-0.101px">1817698</div>
<div class="a " style="left:926.3px;top:659.40px;font-size:13px;color:#1d2330;letter-spacing:-0.101px">1817627</div>
<div class="a " style="left:1018.3px;top:659.40px;font-size:13px;color:#1d2330;letter-spacing:-0.015px">1.53%</div>
<div class="a " style="left:1201px;top:659.40px;font-size:13px;color:#1d2330;letter-spacing:-0.015px">7.19%</div>
<div class="a " style="left:1419.7px;top:659.40px;font-size:13px;color:#1d2330;letter-spacing:1.142px">--</div>
<div class="a" style="left:72px;top:694px;width:8px;height:8px;border-radius:4px;background:#979eab"></div>
<div class="a lk" style="left:87.8px;top:691.40px;font-size:13px;;letter-spacing:0.246px">customer frontend</div>
<div class="a " style="left:436.8px;top:691.40px;font-size:13px;color:#1d2330;letter-spacing:0.302px">/opt/potter/happyTour-2.0.0-x64/jre/bin/java -Djava.net.pre...</div>
<div class="a " style="left:834.2px;top:691.40px;font-size:13px;color:#1d2330;letter-spacing:-0.101px">1817980</div>
<div class="a " style="left:926.3px;top:691.40px;font-size:13px;color:#1d2330;letter-spacing:-0.101px">1817698</div>
<div class="a " style="left:1018.3px;top:691.40px;font-size:13px;color:#1d2330;letter-spacing:-0.015px">0.31%</div>
<div class="a " style="left:1201px;top:691.40px;font-size:13px;color:#1d2330;letter-spacing:-0.015px">3.61%</div>
<div class="a " style="left:1419.7px;top:691.40px;font-size:13px;color:#1d2330;letter-spacing:1.142px">--</div>
<div class="a" style="left:72px;top:726px;width:8px;height:8px;border-radius:4px;background:#979eab"></div>
<div class="a lk" style="left:87.8px;top:723.40px;font-size:13px;;letter-spacing:0.146px">apache_httpd_php</div>
<div class="a " style="left:436.8px;top:723.40px;font-size:13px;color:#1d2330;letter-spacing:0.298px">/opt/potter/happyTour-2.0.0-x64/weblauncher/../apache2.4...</div>
<div class="a " style="left:834.2px;top:723.40px;font-size:13px;color:#1d2330;letter-spacing:-0.101px">1818127</div>
<div class="a " style="left:926.3px;top:723.40px;font-size:13px;color:#1d2330;letter-spacing:-0.101px">1817698</div>
<div class="a " style="left:1018.3px;top:723.40px;font-size:13px;color:#1d2330;letter-spacing:-0.015px">0.25%</div>
<div class="a " style="left:1201px;top:723.40px;font-size:13px;color:#1d2330;letter-spacing:-0.015px">0.74%</div>
<div class="a " style="left:1419.7px;top:723.40px;font-size:13px;color:#1d2330;letter-spacing:1.142px">--</div>
<div class="a" style="left:106px;top:758px;width:8px;height:8px;border-radius:4px;background:#979eab"></div>
<div class="a lk" style="left:121.9px;top:755.40px;font-size:13px;;letter-spacing:0.073px">apache_httpd_php (SmartAgent SDK)</div>
<div class="a " style="left:436.8px;top:755.40px;font-size:13px;color:#1d2330;letter-spacing:0.298px">/opt/potter/happyTour-2.0.0-x64/weblauncher/../apache2.4...</div>
<div class="a " style="left:834.2px;top:755.40px;font-size:13px;color:#1d2330;letter-spacing:-0.101px">1818142</div>
<div class="a " style="left:926.3px;top:755.40px;font-size:13px;color:#1d2330;letter-spacing:-0.101px">1818127</div>
<div class="a " style="left:1018.3px;top:755.40px;font-size:13px;color:#1d2330;letter-spacing:-0.015px">0.08%</div>
<div class="a " style="left:1201px;top:755.40px;font-size:13px;color:#1d2330;letter-spacing:-0.015px">0.12%</div>
<div class="a " style="left:1419.7px;top:755.40px;font-size:13px;color:#1d2330;letter-spacing:1.142px">--</div>
<div class="a" style="left:72px;top:790px;width:8px;height:8px;border-radius:4px;background:#979eab"></div>
<div class="a lk" style="left:87.8px;top:787.40px;font-size:13px;;letter-spacing:0.176px">business backend</div>
<div class="a " style="left:436.8px;top:787.40px;font-size:13px;color:#1d2330;letter-spacing:0.302px">/opt/potter/happyTour-2.0.0-x64/jre/bin/java -Djava.net.pre...</div>
<div class="a " style="left:834.2px;top:787.40px;font-size:13px;color:#1d2330;letter-spacing:-0.101px">1817943</div>
<div class="a " style="left:926.3px;top:787.40px;font-size:13px;color:#1d2330;letter-spacing:-0.101px">1817698</div>
<div class="a " style="left:1018.3px;top:787.40px;font-size:13px;color:#1d2330;letter-spacing:-0.015px">0.22%</div>
<div class="a " style="left:1201px;top:787.40px;font-size:13px;color:#1d2330;letter-spacing:-0.015px">3.01%</div>
<div class="a " style="left:1419.7px;top:787.40px;font-size:13px;color:#1d2330;letter-spacing:1.142px">--</div>
<div class="a" style="left:72px;top:822px;width:8px;height:8px;border-radius:4px;background:#979eab"></div>
<div class="a lk" style="left:87.8px;top:819.40px;font-size:13px;;letter-spacing:0.221px">customer frontend rest</div>
<div class="a " style="left:436.8px;top:819.40px;font-size:13px;color:#1d2330;letter-spacing:0.302px">/opt/potter/happyTour-2.0.0-x64/jre/bin/java -Djava.net.pre...</div>
<div class="a " style="left:834.2px;top:819.40px;font-size:13px;color:#1d2330;letter-spacing:-0.101px">1818026</div>
<div class="a " style="left:926.3px;top:819.40px;font-size:13px;color:#1d2330;letter-spacing:-0.101px">1817698</div>
<div class="a " style="left:1018.3px;top:819.40px;font-size:13px;color:#1d2330;letter-spacing:-0.015px">0.16%</div>
<div class="a " style="left:1201px;top:819.40px;font-size:13px;color:#1d2330;letter-spacing:-0.015px">2.61%</div>
<div class="a " style="left:1419.7px;top:819.40px;font-size:13px;color:#1d2330;letter-spacing:1.142px">--</div>
<div class="a" style="left:72px;top:854px;width:8px;height:8px;border-radius:4px;background:#979eab"></div>
<div class="a lk" style="left:87.8px;top:851.40px;font-size:13px;;letter-spacing:0.234px">third party server</div>
<div class="a " style="left:436.8px;top:851.40px;font-size:13px;color:#1d2330;letter-spacing:0.302px">/opt/potter/happyTour-2.0.0-x64/jre/bin/java -Djava.net.pre...</div>
<div class="a " style="left:834.2px;top:851.40px;font-size:13px;color:#1d2330;letter-spacing:-0.101px">1818079</div>
<div class="a " style="left:926.3px;top:851.40px;font-size:13px;color:#1d2330;letter-spacing:-0.101px">1817698</div>
<div class="a " style="left:1018.3px;top:851.40px;font-size:13px;color:#1d2330;letter-spacing:0.226px">0.11%</div>
<div class="a " style="left:1201px;top:851.40px;font-size:13px;color:#1d2330;letter-spacing:-0.015px">1.64%</div>
<div class="a " style="left:1419.7px;top:851.40px;font-size:13px;color:#1d2330;letter-spacing:1.142px">--</div>
<div class="a" style="left:72px;top:886px;width:8px;height:8px;border-radius:4px;background:#979eab"></div>
<div class="a lk" style="left:87.8px;top:883.40px;font-size:13px;;letter-spacing:0.081px">inprocess MYSQL</div>
<div class="a " style="left:436.8px;top:883.40px;font-size:13px;color:#1d2330;letter-spacing:0.329px">/opt/potter/happyTour-2.0.0-x64/weblauncher/../mysql/Lin...</div>
<div class="a " style="left:834.2px;top:883.40px;font-size:13px;color:#1d2330;letter-spacing:-0.101px">1817906</div>
<div class="a " style="left:926.3px;top:883.40px;font-size:13px;color:#1d2330;letter-spacing:-0.101px">1817698</div>
<div class="a " style="left:1018.3px;top:883.40px;font-size:13px;color:#1d2330;letter-spacing:-0.015px">0.05%</div>
<div class="a " style="left:1201px;top:883.40px;font-size:13px;color:#1d2330;letter-spacing:-0.015px">0.45%</div>
<div class="a " style="left:1419.7px;top:883.40px;font-size:13px;color:#1d2330;letter-spacing:1.142px">--</div>
<div class="a" style="left:40px;top:918px;width:8px;height:8px;border-radius:4px;background:#979eab"></div>
<div class="a lk" style="left:55.7px;top:915.40px;font-size:13px;;letter-spacing:0.262px">my-java-container</div>
<div class="a " style="left:436.8px;top:915.40px;font-size:13px;color:#1d2330;letter-spacing:0.282px">java -jar /app.jar</div>
<div class="a " style="left:834.2px;top:915.40px;font-size:13px;color:#1d2330;letter-spacing:-0.101px">3736704</div>
<div class="a " style="left:926.3px;top:915.40px;font-size:13px;color:#1d2330;letter-spacing:-0.101px">3736535</div>
<div class="a " style="left:1018.3px;top:915.40px;font-size:13px;color:#1d2330;letter-spacing:-0.015px">0.35%</div>
<div class="a " style="left:1201px;top:915.40px;font-size:13px;color:#1d2330;letter-spacing:-0.015px">1.62%</div>
<div class="a " style="left:1419.7px;top:915.40px;font-size:13px;color:#1d2330;letter-spacing:1.142px">--</div>
<svg style="left:1680px;top:855px" width="60" height="60" viewBox="0 0 60 60"><defs><linearGradient id="rh" x1="0" y1="0" x2="0.3" y2="1"><stop offset="0" stop-color="#eef8ff"/><stop offset="0.5" stop-color="#d6e6fb"/><stop offset="1" stop-color="#a4a9e8"/></linearGradient><radialGradient id="rs" cx="0.5" cy="0.5" r="0.5"><stop offset="0" stop-color="#c3c7da" stop-opacity="0.9"/><stop offset="1" stop-color="#fff" stop-opacity="0"/></radialGradient><linearGradient id="re" x1="0" y1="0" x2="0" y2="1"><stop offset="0" stop-color="#49c3f5"/><stop offset="1" stop-color="#3a37d8"/></linearGradient></defs><ellipse cx="30" cy="53" rx="16" ry="3.5" fill="url(#rs)"/><path d="M26.5 7.5q4-3 7 0z" fill="#3b82f6"/><path d="M29.5 2.5q3 1.5 3.5 5h-5z" fill="#3a8ef6"/><rect x="3.5" y="20" width="6" height="14" rx="3" fill="url(#re)"/><rect x="50.5" y="20" width="6" height="14" rx="3" fill="url(#re)"/><path d="M30 7C44 7 53.2 15 53.2 28 53.2 41 43 48.7 30 48.7 17 48.7 6.8 41 6.8 28 6.8 15 16 7 30 7z" fill="url(#rh)"/><path d="M30 13.4C44 13.4 49 18 49 26 49 35 42 39.3 30 39.3 18 39.3 11 35 11 26 11 18 16 13.4 30 13.4z" fill="#131a3a"/><path d="M30 14.5C42 14.5 47 18.5 47 24 42 21 36 20 30 20 24 20 17 21 13 24 13 18.5 18 14.5 30 14.5z" fill="#2c3870" opacity="0.7"/><rect x="18.5" y="24.5" width="5.5" height="9" rx="2.75" fill="#fff"/><rect x="36" y="24.5" width="5.5" height="9" rx="2.75" fill="#fff"/></svg>
</div></body></html>
